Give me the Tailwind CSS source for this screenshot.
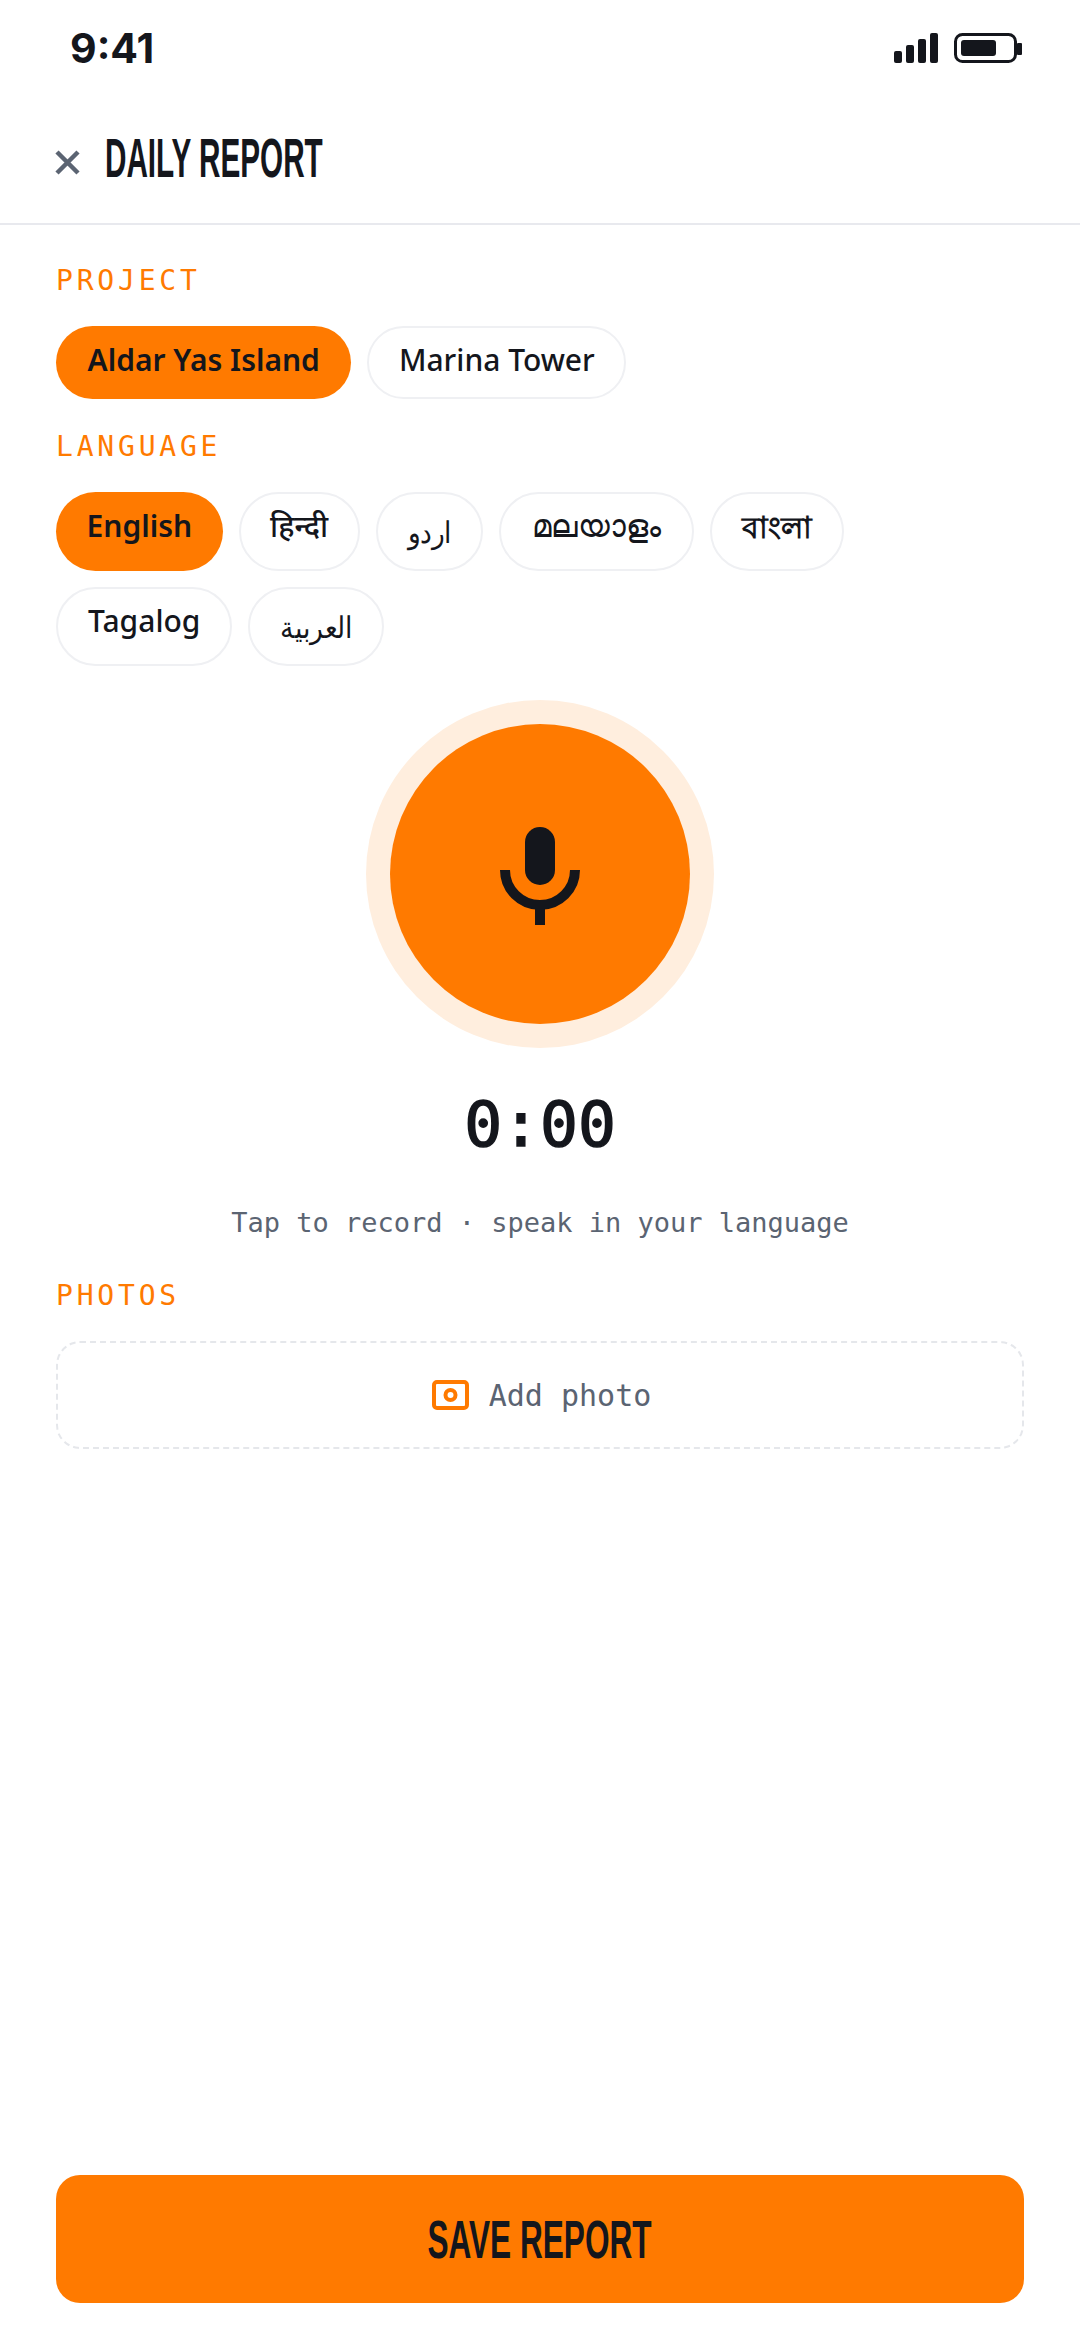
<!DOCTYPE html>
<html lang="en">
<head>
    <meta charset="UTF-8">
    <meta name="viewport" content="width=device-width, initial-scale=1.0">
    <title>Daily Report</title>
    <script src="https://cdn.jsdelivr.net/npm/@tailwindcss/browser@4"></script>
</head>
<body class="bg-white font-['Noto_Sans',sans-serif] text-[#14161c]">
    <div class="flex h-[2340px] w-[1080px] flex-col overflow-hidden">
        <!-- Status bar -->
        <div class="flex h-[96px] items-center justify-between pl-[70px] pr-[58px]">
            <span class="font-['Inter',sans-serif] text-[41px] leading-none font-bold">9:41</span>
            <div class="flex items-center gap-[16px]">
                <svg width="44" height="30" viewBox="0 0 44 30" fill="#14161c">
                    <rect x="0" y="18" width="8" height="12" rx="2"/>
                    <rect x="12" y="12" width="8" height="18" rx="2"/>
                    <rect x="24" y="6" width="8" height="24" rx="2"/>
                    <rect x="36" y="0" width="8" height="30" rx="2"/>
                </svg>
                <svg width="68" height="30" viewBox="0 0 68 30" fill="#14161c">
                    <rect x="1.5" y="1.5" width="60" height="27" rx="7" fill="none" stroke="#14161c" stroke-width="3"/>
                    <rect x="7" y="7" width="35" height="16" rx="3"/>
                    <rect x="63" y="10" width="5" height="12" rx="1"/>
                </svg>
            </div>
        </div>

        <!-- Header -->
        <div class="flex h-[129px] items-center gap-[25px] border-b-2 border-[#e8e9ee] pb-[4px] pl-[55px]">
            <svg width="25" height="25" viewBox="0 0 25 25" class="mt-[9px] shrink-0" stroke="#5b6472" stroke-width="4.5" fill="none">
                <path d="M2 2 L23 23 M23 2 L2 23"/>
            </svg>
            <h1 class="origin-left scale-x-[0.53] font-['Liberation_Sans',sans-serif] text-[56px] leading-none font-bold whitespace-nowrap">DAILY REPORT</h1>
        </div>

        <!-- Form -->
        <div class="flex flex-1 flex-col px-[56px]">
            <div class="mt-[38px] font-['DejaVu_Sans_Mono',monospace] text-[28px] leading-[36px] tracking-[3.8px] text-[#ff7a00]">PROJECT</div>
            <div class="mt-[27px] flex gap-[16px]">
                <span class="flex h-[73px] items-center rounded-full bg-[#ff7a00] px-[31.5px] pb-[7px] text-[30px] font-semibold">Aldar Yas Island</span>
                <span class="flex h-[73px] items-center rounded-full border-2 border-[#eff0f3] px-[29.5px] pb-[7px] text-[30px] font-medium">Marina Tower</span>
            </div>

            <div class="mt-[30px] font-['DejaVu_Sans_Mono',monospace] text-[28px] leading-[36px] tracking-[3.8px] text-[#ff7a00]">LANGUAGE</div>
            <div class="mt-[27px] flex flex-wrap gap-x-[16px] gap-y-[16px]">
                <span class="flex h-[79px] items-center rounded-full bg-[#ff7a00] px-[30.5px] pb-[12px] text-[30px] font-semibold">English</span>
                <span class="flex h-[79px] items-center rounded-full border-2 border-[#eff0f3] px-[29.5px] pb-[12px] text-[30px] font-medium">हिन्दी</span>
                <span class="flex h-[79px] items-center rounded-full border-2 border-[#eff0f3] px-[30px] text-[30px] font-normal"><span class="-mx-[3px] inline-block scale-x-[0.88]">اردو</span></span>
                <span class="flex h-[79px] items-center rounded-full border-2 border-[#eff0f3] px-[31px] pb-[12px] text-[31px] font-medium">മലയാളം</span>
                <span class="flex h-[79px] items-center rounded-full border-2 border-[#eff0f3] px-[30px] pb-[11px] text-[30px] font-semibold">বাংলা</span>
                <span class="flex h-[79px] items-center rounded-full border-2 border-[#eff0f3] px-[30px] pb-[12px] text-[30px] font-medium">Tagalog</span>
                <span class="flex h-[79px] items-center rounded-full border-2 border-[#eff0f3] px-[30px] text-[30px] font-normal"><span class="-mx-[4.5px] inline-block scale-x-[0.89]">العربية</span></span>
            </div>

            <!-- Record button -->
            <div class="mt-[58px] flex flex-col items-center">
                <div class="flex size-[300px] items-center justify-center rounded-full bg-[#ff7a00] shadow-[0_0_0_24px_#ffeede]">
                    <svg width="80" height="98" viewBox="0 0 80 98" fill="none" class="mt-[3px]">
                        <rect x="25" y="0" width="30" height="58" rx="15" fill="#14161c"/>
                        <path d="M5 43 A35 35 0 0 0 75 43" stroke="#14161c" stroke-width="10"/>
                        <rect x="35" y="78" width="10" height="20" fill="#14161c"/>
                    </svg>
                </div>
                <div class="mt-[63px] font-['DejaVu_Sans_Mono',monospace] text-[63px] leading-[76px] [-webkit-text-stroke:1.5px_#14161c]">0:00</div>
                <div class="mt-[42px] font-['DejaVu_Sans_Mono',monospace] text-[27px] leading-[36px] text-[#5b6472]">Tap to record · speak in your language</div>
            </div>

            <div class="mt-[37px] self-start font-['DejaVu_Sans_Mono',monospace] text-[28px] leading-[36px] tracking-[3.8px] text-[#ff7a00]">PHOTOS</div>
            <div class="mt-[27px] flex h-[108px] items-center justify-center gap-[20px] rounded-[24px] border-2 border-dashed border-[#e5e7eb] pl-[3px]">
                <svg width="37" height="30" viewBox="0 0 37 30" fill="none" stroke="#ff7a00" stroke-width="4">
                    <rect x="2" y="2" width="33" height="26" rx="3"/>
                    <circle cx="18.5" cy="15" r="5"/>
                </svg>
                <span class="font-['DejaVu_Sans_Mono',monospace] text-[30px] text-[#5b6472]">Add photo</span>
            </div>

            <button class="mt-auto mb-[37px] flex h-[128px] items-center justify-center rounded-[24px] bg-[#ff7a00]">
                <span class="scale-x-[0.585] font-['Liberation_Sans',sans-serif] text-[54px] leading-none font-bold whitespace-nowrap">SAVE REPORT</span>
            </button>
        </div>
    </div>
</body>
</html>
